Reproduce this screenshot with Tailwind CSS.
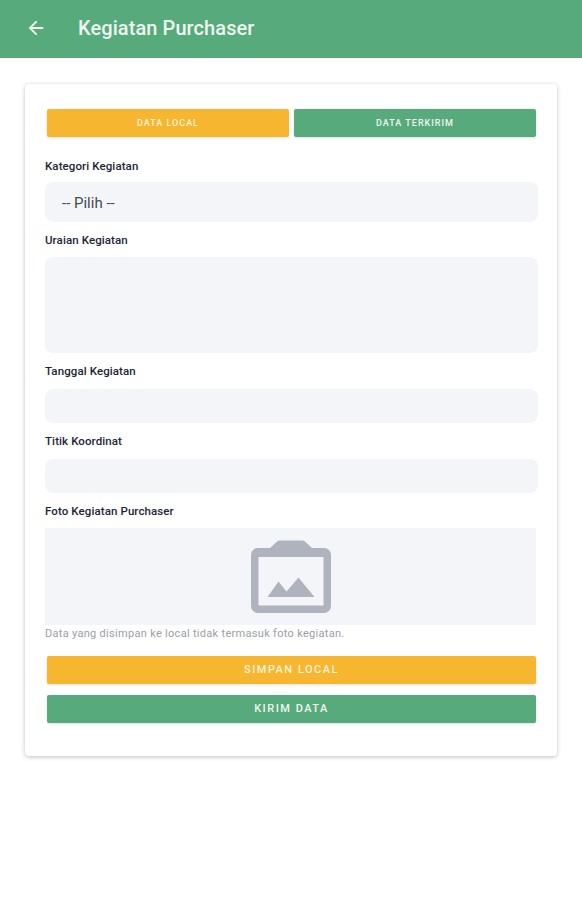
<!DOCTYPE html>
<html lang="en">
<head>
  <meta charset="UTF-8">
  <title>Kegiatan Purchaser</title>
  <script src="https://cdn.jsdelivr.net/npm/@tailwindcss/browser@4"></script>
</head>
<body class="bg-white font-['Roboto',sans-serif] h-[900px] overflow-hidden">

  <div class="h-[58px] bg-[#57aa7b] flex items-center pl-[25px] pb-[2px] text-white">
    <svg class="w-[22px] h-[22px]" viewBox="0 0 24 24" fill="#f4faf6"><path d="M20 11H7.83l5.59-5.59L12 4l-8 8 8 8 1.41-1.41L7.83 13H20v-2z"/></svg>
    <h1 class="ml-[31px] text-[20px] font-medium tracking-[0.08px] text-[#eef7f1]">Kegiatan Purchaser</h1>
  </div>

  <div class="mx-[25px] mt-[26px] h-[672px] bg-white rounded-[4px] shadow-[0_1px_4px_rgba(0,0,0,0.25)] pl-[20px] pr-[19px] pt-[25px]">
    <div class="flex gap-[5px] pl-[2px] pr-[2px]">
      <button class="w-[242px] h-[28px] pt-[1px] bg-[#f6b630] rounded-[2px] shadow-sm text-[#fdf3d8] text-[9px] font-medium tracking-[1px]">DATA LOCAL</button>
      <button class="w-[242px] h-[28px] pt-[1px] bg-[#57aa7b] rounded-[2px] shadow-sm text-[#eef7f1] text-[9px] font-medium tracking-[1px]">DATA TERKIRIM</button>
    </div>

    <p class="mt-[21px] h-[16px] leading-[16px] text-[11.5px] font-medium tracking-[0.1px] text-[#1c2536]">Kategori Kegiatan</p>
    <div class="mt-[8px] h-[40px] w-[493px] bg-[#f4f5f9] rounded-[8px] flex items-center pl-[17px] pt-[2px] text-[15px] text-[#444a55]">-- Pilih --</div>

    <p class="mt-[10px] h-[16px] leading-[16px] text-[11.5px] font-medium tracking-[0.1px] text-[#1c2536]">Uraian Kegiatan</p>
    <div class="mt-[9px] h-[96px] w-[493px] bg-[#f4f5f9] rounded-[8px]"></div>

    <p class="mt-[10px] h-[16px] leading-[16px] text-[11.5px] font-medium tracking-[0.1px] text-[#1c2536]">Tanggal Kegiatan</p>
    <div class="mt-[10px] h-[34px] w-[493px] bg-[#f4f5f9] rounded-[8px]"></div>

    <p class="mt-[10px] h-[16px] leading-[16px] text-[11.5px] font-medium tracking-[0.1px] text-[#1c2536]">Titik Koordinat</p>
    <div class="mt-[10px] h-[34px] w-[493px] bg-[#f4f5f9] rounded-[8px]"></div>

    <p class="mt-[10px] h-[16px] leading-[16px] text-[11.5px] font-medium tracking-[0.1px] text-[#1c2536]">Foto Kegiatan Purchaser</p>
    <div class="mt-[9px] h-[97px] w-[491px] bg-[#f4f5f9] flex items-center justify-center">
      <svg class="w-[82px] h-[74px]" viewBox="0 0 82 74">
        <path fill="#aeb3bd" d="M20 8 L27 1.5 Q28 0.5 30 0.5 H52 Q54 0.5 55 1.5 L62 8 H74 a7 7 0 0 1 7 7 V66 a7 7 0 0 1 -7 7 H8 a7 7 0 0 1 -7 -7 V15 a7 7 0 0 1 7 -7 Z"/>
        <rect x="8.5" y="17" width="65" height="48.5" fill="#f4f5f9"/>
        <path fill="#aeb3bd" d="M17.5 57 L28.5 41.5 L36.5 51.5 L48.5 37.5 L64.5 57 Z"/>
      </svg>
    </div>
    <p class="mt-[1px] h-[16px] leading-[16px] text-[11px] text-[#9a9ea6] tracking-[0.3px]">Data yang disimpan ke local tidak termasuk foto kegiatan.</p>

    <button class="block mt-[14px] ml-[2px] w-[489px] h-[28px] bg-[#f6b630] rounded-[2px] shadow-sm text-[#fdf3d8] text-[11px] font-medium tracking-[1.5px]">SIMPAN LOCAL</button>
    <button class="block mt-[11px] ml-[2px] w-[489px] h-[28px] bg-[#57aa7b] rounded-[2px] shadow-sm text-[#eef7f1] text-[11px] font-medium tracking-[1.5px]">KIRIM DATA</button>
  </div>

</body>
</html>
